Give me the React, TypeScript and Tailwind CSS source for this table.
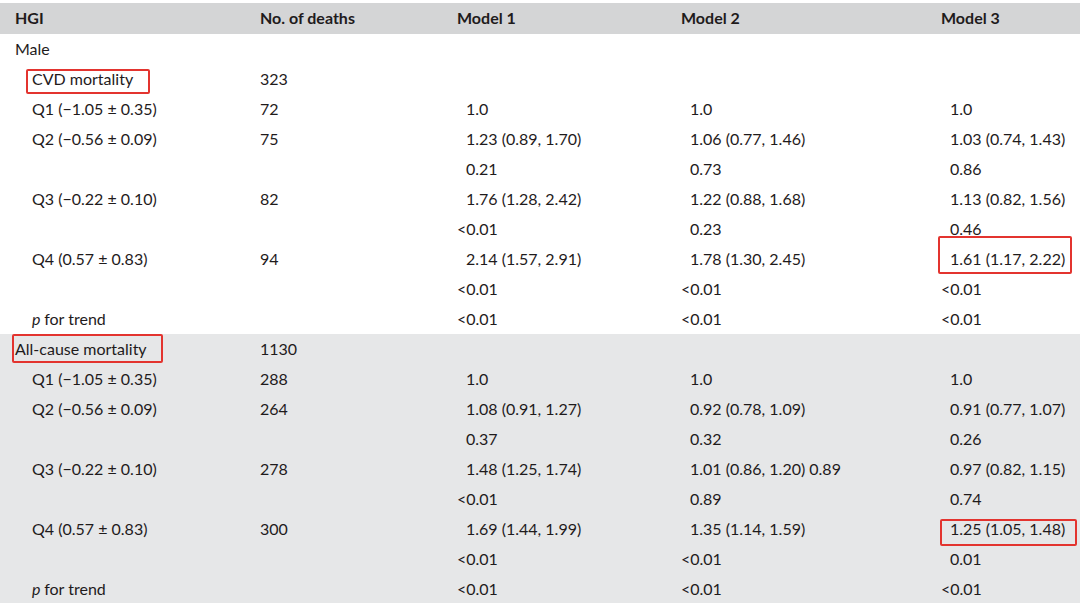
type Mark = { top: number; bottom: number; left: number; width: number };

type Row = {
  label?: string;
  indent?: boolean;
  italicP?: boolean;
  labelMark?: Mark;
  deaths?: string;
  m1?: string;
  m2?: string;
  m3?: string;
  m3Mark?: Mark;
};

const male: Row[] = [
  { label: 'Male' },
  { label: 'CVD mortality', indent: true, deaths: '323', labelMark: { top: 0, bottom: -6, left: -6, width: 124 } },
  { label: 'Q1 (−1.05 ± 0.35)', indent: true, deaths: '72', m1: '1.0', m2: '1.0', m3: '1.0' },
  { label: 'Q2 (−0.56 ± 0.09)', indent: true, deaths: '75', m1: '1.23 (0.89, 1.70)', m2: '1.06 (0.77, 1.46)', m3: '1.03 (0.74, 1.43)' },
  { m1: '0.21', m2: '0.73', m3: '0.86' },
  { label: 'Q3 (−0.22 ± 0.10)', indent: true, deaths: '82', m1: '1.76 (1.28, 2.42)', m2: '1.22 (0.88, 1.68)', m3: '1.13 (0.82, 1.56)' },
  { m1: '<0.01', m2: '0.23', m3: '0.46' },
  {
    label: 'Q4 (0.57 ± 0.83)',
    indent: true,
    deaths: '94',
    m1: '2.14 (1.57, 2.91)',
    m2: '1.78 (1.30, 2.45)',
    m3: '1.61 (1.17, 2.22)',
    m3Mark: { top: -13, bottom: -6, left: -12, width: 134 },
  },
  { m1: '<0.01', m2: '<0.01', m3: '<0.01' },
  { label: 'for trend', italicP: true, indent: true, m1: '<0.01', m2: '<0.01', m3: '<0.01' },
];

const allCause: Row[] = [
  { label: 'All-cause mortality', deaths: '1130', labelMark: { top: -5, bottom: -5, left: -3, width: 151 } },
  { label: 'Q1 (−1.05 ± 0.35)', indent: true, deaths: '288', m1: '1.0', m2: '1.0', m3: '1.0' },
  { label: 'Q2 (−0.56 ± 0.09)', indent: true, deaths: '264', m1: '1.08 (0.91, 1.27)', m2: '0.92 (0.78, 1.09)', m3: '0.91 (0.77, 1.07)' },
  { m1: '0.37', m2: '0.32', m3: '0.26' },
  { label: 'Q3 (−0.22 ± 0.10)', indent: true, deaths: '278', m1: '1.48 (1.25, 1.74)', m2: '1.01 (0.86, 1.20) 0.89', m3: '0.97 (0.82, 1.15)' },
  { m1: '<0.01', m2: '0.89', m3: '0.74' },
  {
    label: 'Q4 (0.57 ± 0.83)',
    indent: true,
    deaths: '300',
    m1: '1.69 (1.44, 1.99)',
    m2: '1.35 (1.14, 1.59)',
    m3: '1.25 (1.05, 1.48)',
    m3Mark: { top: 0, bottom: -8, left: -10, width: 137 },
  },
  { m1: '<0.01', m2: '<0.01', m3: '0.01' },
  { label: 'for trend', italicP: true, indent: true, m1: '<0.01', m2: '<0.01', m3: '<0.01' },
];

const cols = 'grid grid-cols-[245px_197px_224px_260px_1fr] pl-[15px]';

function RedBox({ mark }: { mark: Mark }) {
  return (
    <span
      className="pointer-events-none absolute rounded-[2px] border-2 border-[#e3342f]"
      style={{ top: mark.top, bottom: mark.bottom, left: mark.left, width: mark.width }}
    />
  );
}

function Value({ text, mark }: { text?: string; mark?: Mark }) {
  if (!text) return <div />;
  const lt = text.startsWith('<');
  return (
    <div className={lt ? '' : 'pl-[9px]'}>
      <span className="relative inline-block">
        {text}
        {mark && <RedBox mark={mark} />}
      </span>
    </div>
  );
}

function TableRow({ row }: { row: Row }) {
  return (
    <div className={`${cols} h-[30px] items-center pb-[2px]`}>
      <div className={row.indent ? 'pl-[17px]' : ''}>
        {row.label && (
          <span className="relative inline-block">
            {row.italicP && <i>p </i>}
            {row.label}
            {row.labelMark && <RedBox mark={row.labelMark} />}
          </span>
        )}
      </div>
      <div>{row.deaths}</div>
      <Value text={row.m1} />
      <Value text={row.m2} />
      <Value text={row.m3} mark={row.m3Mark} />
    </div>
  );
}

export default function App() {
  return (
    <div
      className="h-[603px] w-[1080px] overflow-hidden bg-white text-[16px] leading-[19px] text-[#1f1b1c]"
      style={{ fontFamily: 'Lato, "Open Sans", "Liberation Sans", sans-serif' }}
    >
      <div className="pt-[3px]">
        <div className={`${cols} h-[31px] items-center bg-[#d4d5d6] pb-[2px] font-bold`}>
          <div>HGI</div>
          <div>No. of deaths</div>
          <div>Model 1</div>
          <div>Model 2</div>
          <div>Model 3</div>
        </div>
      </div>
      <div>
        {male.map((r, i) => (
          <TableRow key={i} row={r} />
        ))}
      </div>
      <div className="bg-[#e6e7e8]">
        {allCause.map((r, i) => (
          <TableRow key={i} row={r} />
        ))}
      </div>
    </div>
  );
}
